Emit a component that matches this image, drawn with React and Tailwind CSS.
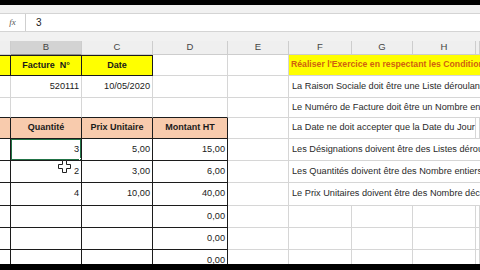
const W = {
  A: "w-[11px]",
  B: "w-[71px]",
  C: "w-[71px]",
  D: "w-[75px]",
  E: "w-[61px]",
  F: "w-[63px]",
  G: "w-[61px]",
  H: "w-[63px]",
  FH: "w-[187px]",
  I: "flex-1",
};

// right / bottom border styles: g = gridline, k = black, n = none
const R = { g: "border-r border-r-[#d6d6d6]", k: "border-r border-r-[#1c1c1c]", n: "" };
const B = { g: "border-b border-b-[#d6d6d6]", k: "border-b border-b-[#1c1c1c]", n: "" };

function Cell({ w, r = "g", b = "g", className = "", children }) {
  return (
    <div
      className={`${W[w]} shrink-0 h-full box-border flex items-center overflow-hidden whitespace-pre ${R[r]} ${B[b]} ${className}`}
    >
      {children}
    </div>
  );
}

function Row({ h, children }) {
  return <div className={`flex w-full shrink-0 ${h}`}>{children}</div>;
}

const rules = [
  "La Raison Sociale doit être une Liste déroulante",
  "Le Numéro de Facture doit être un Nombre entier",
  "La Date ne doit accepter que la Date du Jour",
  "Les Désignations doivent être des Listes déroulantes",
  "Les Quantités doivent être des Nombre entiers",
  "Le Prix Unitaires doivent être des Nombre décimaux",
];

const lines = [
  ["3", "5,00", "15,00"],
  ["2", "3,00", "6,00"],
  ["4", "10,00", "40,00"],
];

const heads = [
  ["A", ""],
  ["B", "B"],
  ["C", "C"],
  ["D", "D"],
  ["E", "E"],
  ["F", "F"],
  ["G", "G"],
  ["H", "H"],
  ["I", ""],
];

function RuleCell({ children }) {
  return (
    <div className="flex-1 h-full border-b border-b-[#d6d6d6] flex items-center pl-[3px] whitespace-nowrap overflow-hidden text-[#2a2a2a]">
      {children}
    </div>
  );
}

export default function App() {
  return (
    <div
      className="w-[480px] h-[270px] overflow-hidden bg-white text-[#1a1a1a] text-[9.2px] relative"
      style={{ fontFamily: "'Liberation Sans', Arial, sans-serif" }}
    >
      <div className="h-[5px] bg-black" />
      <div className="h-[8px] bg-[#f1f1f1]" />

      {/* formula bar */}
      <div className="h-[19px] flex border-y border-[#d4d4d4] bg-white">
        <div className="w-[26px] flex items-center justify-center border-r border-[#cfcfcf]">
          <span className="italic text-[#555] text-[9px]" style={{ fontFamily: "'Liberation Serif', serif" }}>
            fx
          </span>
        </div>
        <div className="flex-1 flex items-center pl-[10px] text-[10px]">3</div>
      </div>

      <div className="h-[9px] bg-[#f1f1f1]" />

      {/* column headers */}
      <div className="h-[14px] flex bg-[#efefef] text-[#444] text-[9.5px]">
        {heads.map(([w, label]) => (
          <div
            key={w}
            className={`${W[w]} shrink-0 h-full box-border flex items-center justify-center border-r border-r-[#cdcdcd] border-b ${
              w === "B" ? "bg-[#d3d3d3] border-b-[#8c8c8c]" : "border-b-[#cdcdcd]"
            }`}
          >
            {label}
          </div>
        ))}
      </div>

      {/* sheet body */}
      <div className="h-[209px] overflow-hidden flex flex-col">
        <Row h="h-[21px]">
          <Cell w="A" r="k" b="k" className="bg-[#ffff00] border-t border-t-[#1c1c1c]" />
          <Cell w="B" r="k" b="k" className="bg-[#ffff00] border-t border-t-[#1c1c1c] justify-center font-bold text-[9px]">
            Facture  N°
          </Cell>
          <Cell w="C" r="k" b="k" className="bg-[#ffff00] border-t border-t-[#1c1c1c] justify-center font-bold text-[9px]">
            Date
          </Cell>
          <Cell w="D" />
          <Cell w="E" />
          <div className="flex-1 h-full bg-[#ffff00] border-b border-b-[#d6d6d6] flex items-center pl-[2px] whitespace-nowrap overflow-hidden font-bold text-[8.7px] text-[#cf5f10]">
            Réaliser l'Exercice en respectant les Conditions
          </div>
        </Row>

        <Row h="h-[22px]">
          <Cell w="A" />
          <Cell w="B" className="justify-end pr-[2px]">520111</Cell>
          <Cell w="C" className="justify-end pr-[2px]">10/05/2020</Cell>
          <Cell w="D" />
          <Cell w="E" />
          <RuleCell>{rules[0]}</RuleCell>
        </Row>

        <Row h="h-[20px]">
          <Cell w="A" b="k" />
          <Cell w="B" b="k" />
          <Cell w="C" b="k" />
          <Cell w="D" b="k" />
          <Cell w="E" />
          <RuleCell>{rules[1]}</RuleCell>
        </Row>

        <Row h="h-[21px]">
          <Cell w="A" r="k" b="k" className="bg-[#f8cbad]" />
          <Cell w="B" r="k" b="k" className="bg-[#f8cbad] justify-center font-bold text-[9px]">Quantité</Cell>
          <Cell w="C" r="k" b="k" className="bg-[#f8cbad] justify-center font-bold text-[9px]">Prix Unitaire</Cell>
          <Cell w="D" r="k" b="k" className="bg-[#f8cbad] justify-center font-bold text-[9px]">Montant HT</Cell>
          <Cell w="E" />
          <Cell w="FH" className="pl-[3px] text-[#2a2a2a]">{rules[2]}</Cell>
          <Cell w="I" />
        </Row>

        {lines.map(([q, p, m], i) => (
          <Row key={i} h={i === 2 ? "h-[23px]" : "h-[22px]"}>
            <Cell w="A" r="k" b="k" />
            <Cell w="B" r="k" b="k" className="justify-end pr-[2px] relative">
              {q}
              {i === 0 && (
                <>
                  <div className="absolute -left-px -top-px -right-px -bottom-px border-2 border-[#217346]" />
                  <div className="absolute -right-[3px] -bottom-[3px] w-[5px] h-[5px] bg-[#217346] border border-white" />
                </>
              )}
            </Cell>
            <Cell w="C" r="k" b="k" className="justify-end pr-[2px]">{p}</Cell>
            <Cell w="D" r="k" b="k" className="justify-end pr-[2px]">{m}</Cell>
            <Cell w="E" />
            <RuleCell>{rules[i + 3]}</RuleCell>
          </Row>
        ))}

        {[0, 1, 2].map((i) => (
          <Row key={`e${i}`} h="h-[22px]">
            <Cell w="A" r="k" b="k" />
            <Cell w="B" r="k" b="k" />
            <Cell w="C" r="k" b="k" />
            <Cell w="D" r="k" b="k" className="justify-end pr-[2px]">0,00</Cell>
            <Cell w="E" />
            <Cell w="F" />
            <Cell w="G" />
            <Cell w="H" />
            <Cell w="I" />
          </Row>
        ))}
      </div>

      <div className="h-[6px] bg-black" />

      {/* mouse cursor */}
      <svg className="absolute left-[58px] top-[160px]" width="13" height="13" viewBox="0 0 13 13">
        <path
          d="M4.5 0.5h4v4h4v4h-4v4h-4v-4h-4v-4h4z"
          fill="#fff"
          stroke="#222"
          strokeWidth="1"
        />
      </svg>
    </div>
  );
}
